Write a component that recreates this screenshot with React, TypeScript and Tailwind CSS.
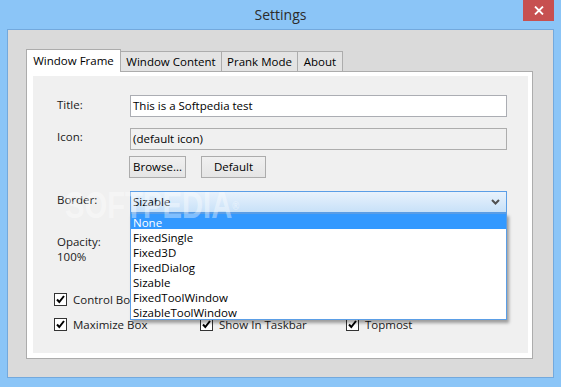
import React from "react";

const font = { fontFamily: '"Open Sans", "Noto Sans", sans-serif' };

const CheckBox = ({ label }: { label: string }) => (
  <div className="flex items-center w-[146px] h-[13px]">
    <div className="w-[13px] h-[13px] border border-[#333333] bg-white flex items-center justify-center shrink-0">
      <svg width="11" height="11" viewBox="0 0 11 11">
        <path d="M2 5.5 L4.3 8 L9 2" stroke="#000" strokeWidth="2" fill="none" />
      </svg>
    </div>
    <span className="ml-[6px] text-[11.5px] leading-[15px] text-[#1a1a1a] whitespace-nowrap">{label}</span>
  </div>
);

const Tab = ({ label, w, active }: { label: string; w: string; active?: boolean }) =>
  active ? (
    <div className={`${w} h-[23px] bg-white border border-b-0 border-[#acacac] flex items-center justify-center text-[11.5px] text-black`}>
      {label}
    </div>
  ) : (
    <div className={`${w} h-[20px] bg-[#e3e3e3] border-t border-r border-[#acacac] flex items-center justify-center text-[11.5px] text-black mb-px`}>
      {label}
    </div>
  );

const options = ["None", "FixedSingle", "Fixed3D", "FixedDialog", "Sizable", "FixedToolWindow", "SizableToolWindow"];

const App = () => {
  return (
    <div className="w-[561px] h-[387px] bg-[#8bc5f7] flex flex-col" style={font}>
      {/* Title bar */}
      <div className="h-[29px] grid grid-cols-[1fr_auto_1fr] items-start shrink-0">
        <div />
        <span className="mt-[4px] text-[14px] text-[#2b2b2b]">Settings</span>
        <div className="flex justify-end pr-[7px]">
          <div className="w-[31px] h-[21px] bg-[#c75050] flex items-center justify-center">
            <svg width="10" height="9" viewBox="0 0 10 9">
              <path d="M1 0.5 L9 8.5 M9 0.5 L1 8.5" stroke="#fff" strokeWidth="1.8" fill="none" />
            </svg>
          </div>
        </div>
      </div>

      {/* Client area */}
      <div className="mx-[7px] mb-[9px] flex-1 bg-[#dadada] border border-[#73a9dd] pl-[18px] pt-[20px]">
        <div className="w-[507px] h-[309px] flex flex-col">
          {/* Tab headers */}
          <div className="flex items-end h-[22px] -mb-px relative z-10">
            <Tab label="Window Frame" w="w-[95px]" active />
            <Tab label="Window Content" w="w-[101px]" />
            <Tab label="Prank Mode" w="w-[76px]" />
            <Tab label="About" w="w-[45px]" />
          </div>

          {/* Tab page */}
          <div className="flex-1 border border-[#acacac] bg-white pl-[6px] pt-[4px] pr-[4px] pb-[5px] flex">
            <div className="flex-1 bg-[#f0f0f0] relative pl-[24px] pt-[19px]">
              {/* Title */}
              <div className="flex items-start">
                <span className="w-[73px] pt-[2px] text-[11.5px] leading-[15px] text-[#1a1a1a]">Title:</span>
                <div className="w-[377px] h-[22px] bg-white border border-[#abadb3] flex items-center px-[2px] text-[11.5px] text-black">
                  This is a Softpedia test
                </div>
              </div>

              {/* Icon */}
              <div className="flex items-start mt-[11px]">
                <span className="w-[73px] pt-[1px] text-[11.5px] leading-[15px] text-[#1a1a1a]">Icon:</span>
                <div className="w-[377px] h-[22px] bg-[#f0f0f0] border border-[#adadad] flex items-center px-[2px] text-[11.5px] text-black">
                  (default icon)
                </div>
              </div>

              {/* Buttons */}
              <div className="flex mt-[6px] ml-[72px] gap-[15px]">
                <button className="w-[57px] h-[22px] border border-[#acacac] bg-gradient-to-b from-[#f0f0f0] to-[#e5e5e5] text-[11.5px] text-black">
                  Browse...
                </button>
                <button className="w-[65px] h-[22px] border border-[#acacac] bg-gradient-to-b from-[#f0f0f0] to-[#e5e5e5] text-[11.5px] text-black">
                  Default
                </button>
              </div>

              {/* Border */}
              <div className="flex items-start mt-[13px]">
                <span className="w-[73px] pt-[1px] text-[11.5px] leading-[15px] text-[#1a1a1a]">Border:</span>
                <div className="w-[377px] h-[22px] border border-[#5b9ee6] bg-gradient-to-b from-[#e8f2fc] to-[#c8e1f8] flex items-center justify-between pl-[2px] pr-[6px] text-[11.5px] text-black">
                  <span>Sizable</span>
                  <svg width="9" height="6" viewBox="0 0 9 6">
                    <path d="M1 1 L4.5 4.5 L8 1" stroke="#505050" strokeWidth="2" fill="none" />
                  </svg>
                </div>
              </div>

              {/* Opacity */}
              <div className="mt-[21px] text-[11.5px] leading-[15px] text-[#1a1a1a]">
                <div>Opacity:</div>
                <div>100%</div>
              </div>

              {/* Checkboxes */}
              <div className="mt-[29px] ml-[-3px] flex flex-col gap-[12px]">
                <div className="flex">
                  <CheckBox label="Control Box" />
                  <CheckBox label="Minimize Box" />
                  <CheckBox label="Show Icon" />
                </div>
                <div className="flex">
                  <CheckBox label="Maximize Box" />
                  <CheckBox label="Show In Taskbar" />
                  <CheckBox label="Topmost" />
                </div>
              </div>

              {/* Dropdown list (open) */}
              <div className="absolute left-[97px] top-[137px] w-[377px] h-[107px] bg-white border border-[#5b9ee6] shadow-[2px_3px_3px_rgba(0,0,0,0.35)] z-20 flex flex-col">
                {options.map((o, i) => (
                  <div
                    key={o}
                    className={`h-[15px] leading-[15px] pt-px pl-[2px] text-[11.5px] ${i === 0 ? "bg-[#3399ff] text-white" : "text-black"}`}
                  >
                    {o}
                  </div>
                ))}
              </div>

              {/* Watermark */}
              <div
                className="absolute left-[32px] top-[115px] z-30 pointer-events-none text-[37px] leading-[30px] font-bold text-white/40 scale-x-[0.79] origin-left whitespace-nowrap"
                style={{ fontFamily: '"Liberation Sans", sans-serif' }}
              >
                SOFTPEDIA<span className="text-[12px] align-top">®</span>
              </div>
            </div>
          </div>
        </div>
      </div>
    </div>
  );
};

export default App;
